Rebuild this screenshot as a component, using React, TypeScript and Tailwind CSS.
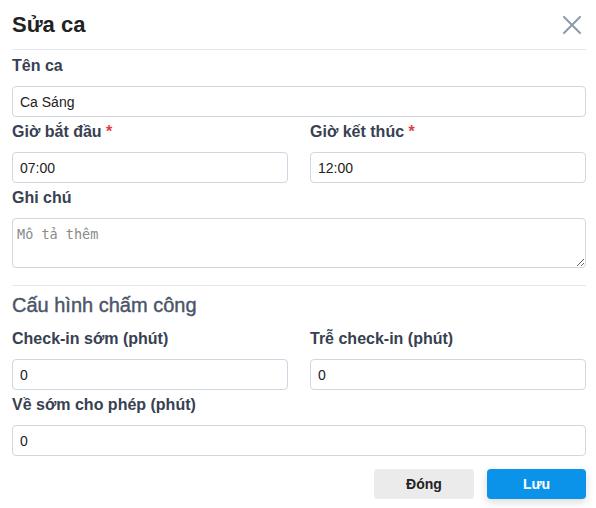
const labelCls = "block text-[16px] font-bold text-[#374151] leading-[20px]";
const inputCls =
	"w-full h-[31px] rounded-[4px] border border-[#cfd7e2] bg-white px-[7px] text-[14px] text-[#222] outline-none";

function Field({
	label,
	value,
	required,
}: {
	label: string;
	value: string;
	required?: boolean;
}) {
	return (
		<div className="flex flex-col gap-[10px]">
			<label className={labelCls}>
				{label}
				{required && <span className="text-[#e53e3e]"> *</span>}
			</label>
			<input className={inputCls} defaultValue={value} />
		</div>
	);
}

export default function App() {
	return (
		<div
			className="w-[596px] h-[508px] bg-white pl-3 pr-[10px] pt-[10px]"
			style={{ fontFamily: '"Liberation Sans", Arial, sans-serif' }}
		>
			{/* Header */}
			<div className="flex items-center justify-between h-[28px]">
				<h1 className="text-[22px] font-bold text-[#222]">Sửa ca</h1>
				<button className="mr-[5px] mt-[2px] text-[#8d99ab]">
					<svg width="18" height="18" viewBox="0 0 18 18" fill="none">
						<path
							d="M1 1L17 17M17 1L1 17"
							stroke="currentColor"
							strokeWidth="2"
							strokeLinecap="round"
						/>
					</svg>
				</button>
			</div>
			<div className="mt-[11px] border-t border-[#e5e7eb]" />

			{/* Ca */}
			<div className="mt-[6px] flex flex-col gap-[5px]">
				<Field label="Tên ca" value="Ca Sáng" />
				<div className="grid grid-cols-2 gap-[22px]">
					<Field label="Giờ bắt đầu" value="07:00" required />
					<Field label="Giờ kết thúc" value="12:00" required />
				</div>
				<div className="flex flex-col gap-[10px]">
					<label className={labelCls}>Ghi chú</label>
					<textarea
						className="w-full h-[50px] rounded-[4px] border border-[#cfd7e2] px-[4px] py-[6px] text-[13.5px] leading-[18px] outline-none placeholder:text-[#8a8a8a]"
						style={{ fontFamily: '"DejaVu Sans Mono", monospace' }}
						placeholder="Mô tả thêm"
					/>
				</div>
			</div>

			<div className="mt-[17px] border-t border-[#e5e7eb]" />

			{/* Cấu hình */}
			<h2 className="mt-[7px] text-[20px] font-medium text-[#4a5568] leading-[24px] [-webkit-text-stroke:0.4px_#4a5568]">
				Cấu hình chấm công
			</h2>
			<div className="mt-[12px] flex flex-col gap-[5px]">
				<div className="grid grid-cols-2 gap-[22px]">
					<Field label="Check-in sớm (phút)" value="0" />
					<Field label="Trễ check-in (phút)" value="0" />
				</div>
				<Field label="Về sớm cho phép (phút)" value="0" />
			</div>

			{/* Footer */}
			<div className="mt-[13px] flex justify-end gap-[13px]">
				<button className="w-[100px] h-[30px] rounded-[4px] bg-[#ebebeb] text-[14px] font-bold text-[#222]">
					Đóng
				</button>
				<button className="w-[99px] h-[30px] rounded-[4px] bg-[#0b93ea] text-[14px] font-bold text-white shadow-[0_3px_8px_rgba(0,0,0,0.15)]">
					Lưu
				</button>
			</div>
		</div>
	);
}
